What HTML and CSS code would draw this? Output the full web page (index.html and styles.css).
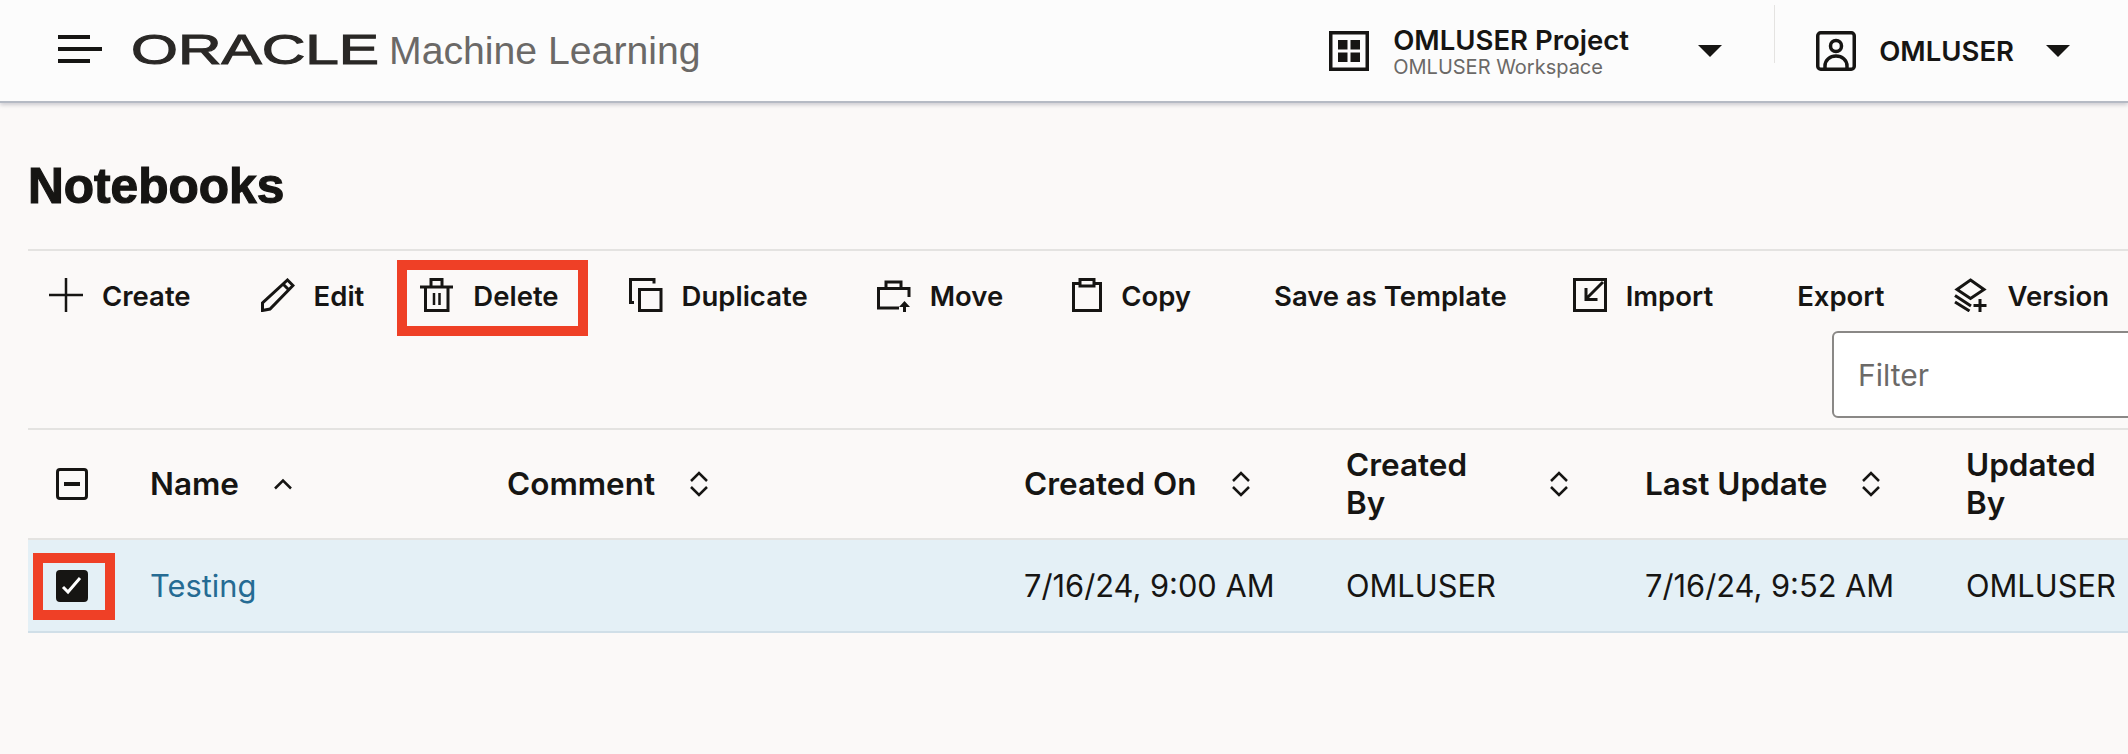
FILE: index.html
```html
<!DOCTYPE html>
<html>
<head>
    <meta charset="utf-8">
    <title>Notebooks - Oracle Machine Learning</title>
    <link rel="stylesheet" href="styles.css">
</head>
<body>

    <header class="topbar">
        <div class="brand">
            <svg class="menu-icon" width="44" height="28" viewBox="0 0 44 28"><path d="M0 0h32v4H0zM0 12h44v4H0zM0 24h32v4H0z" fill="#161513"/></svg>
            <svg class="oracle-logo" width="246" height="34" viewBox="0 0 246 34"><text x="-1" y="32" textLength="248" lengthAdjust="spacingAndGlyphs">ORACLE</text></svg>
            <span class="product">Machine Learning</span>
        </div>
        <div class="project">
            <svg width="40" height="40" viewBox="0 0 40 40"><path d="M0 0h40v40H0zM3.500 3.500v33h33v-33zM9 9h9.500v9.500H9zM21.500 9H31v9.500h-9.500zM9 21.500h9.500V31H9zM21.500 21.500H31V31h-9.500z" fill="#161513" fill-rule="evenodd"/></svg>
            <div class="project-text">
                <div class="project-name">OMLUSER Project</div>
                <div class="project-sub">OMLUSER Workspace</div>
            </div>
            <span class="caret"></span>
        </div>
        <div class="divider"></div>
        <div class="user">
            <svg width="40" height="40" viewBox="0 0 40 40" fill="none" stroke="#161513" stroke-width="3.500"><rect x="1.750" y="1.750" width="36.500" height="36.500" rx="3"/><circle cx="20" cy="15" r="5.500"/><path d="M9 38v-3c0-6 5-10 11-10s11 4 11 10v3"/></svg>
            <span class="user-name">OMLUSER</span>
            <span class="caret"></span>
        </div>
    </header>

    <main class="content">
        <h1 class="page-title">Notebooks</h1>

        <div class="toolbar">
            <div class="tool tool-create">
                <svg width="34" height="34" viewBox="0 0 34 34"><path d="M15.750 0h2.500v15.750H34v2.500H18.250V34h-2.500V18.250H0v-2.500h15.750z" fill="#161513"/></svg>
                <span>Create</span>
            </div>
            <div class="tool tool-edit">
                <svg width="34" height="34" viewBox="0 0 34 34" fill="none" stroke="#161513" stroke-width="3"><path d="M26.500 2L32 7.500 9 31l-7.500 1.500V25zM22.500 6.500l5.500 5.500"/></svg>
                <span>Edit</span>
            </div>
            <div class="tool tool-delete marked">
                <svg width="34" height="34" viewBox="0 0 34 34" fill="none" stroke="#161513" stroke-width="3"><path d="M0 9h33M11 8V1.500h11V8M5.500 10v22.500H28V10"/><path d="M14 15v12M19.500 15v12" stroke-width="2.500"/></svg>
                <span>Delete</span>
            </div>
            <div class="tool tool-duplicate">
                <svg width="34" height="34" viewBox="0 0 34 34" fill="none" stroke="#161513" stroke-width="3"><path d="M25 5.500V1.500H1.500v23H5M10.500 11.500h21.500v21H10.500z"/></svg>
                <span>Duplicate</span>
            </div>
            <div class="tool tool-move">
                <svg width="34" height="34" viewBox="0 0 34 34"><path d="M9 9V4h15v5M22 30H1.500V10.500H32V19" fill="none" stroke="#161513" stroke-width="3"/><path d="M27.500 23l5.500 6h-4v5h-3v-5h-4z" fill="#161513"/></svg>
                <span>Move</span>
            </div>
            <div class="tool tool-copy">
                <svg width="30" height="34" viewBox="0 0 30 34" fill="none" stroke="#161513" stroke-width="3"><path d="M7 5.500H1.500v27h27v-27H23M8 1.500h14v6.500H8z"/></svg>
                <span>Copy</span>
            </div>
            <div class="tool tool-template"><span>Save as Template</span></div>
            <div class="tool tool-import">
                <svg width="34" height="34" viewBox="0 0 34 34" fill="none" stroke="#161513" stroke-width="3"><rect x="1.500" y="1.500" width="31" height="31"/><path d="M30 4L13 21M13 10v11.500h11.500"/></svg>
                <span>Import</span>
            </div>
            <div class="tool tool-export"><span>Export</span></div>
            <div class="tool tool-version">
                <svg width="34" height="34" viewBox="0 0 34 34" fill="none" stroke="#161513" stroke-width="3"><path d="M16.500 2L30 11.500 16.500 20.500 3 11.500zM1 17.500l16 10.500M1 24l14.500 9M26 21v13M19.500 27.500h13"/></svg>
                <span>Version</span>
            </div>
        </div>

        <div class="filter-row">
            <div class="filter">Filter</div>
        </div>

        <table class="grid">
            <thead>
                <tr>
                    <th class="col-check"><span class="check"><i></i></span></th>
                    <th class="col-name"><span class="head">Name<svg class="sort" width="20" height="12" viewBox="0 0 20 12"><path d="M2 10.500l8-8 8 8" fill="none" stroke="#161513" stroke-width="2.500"/></svg></span></th>
                    <th class="col-comment"><span class="head">Comment<svg class="sort" width="20" height="26" viewBox="0 0 20 26"><path d="M2 10l8-8 8 8M2 16l8 8 8-8" fill="none" stroke="#161513" stroke-width="2.500"/></svg></span></th>
                    <th class="col-created"><span class="head">Created On<svg class="sort" width="20" height="26" viewBox="0 0 20 26"><path d="M2 10l8-8 8 8M2 16l8 8 8-8" fill="none" stroke="#161513" stroke-width="2.500"/></svg></span></th>
                    <th class="col-by"><span class="head"><span>Created<br>By</span><svg class="sort sort-wide" width="20" height="26" viewBox="0 0 20 26"><path d="M2 10l8-8 8 8M2 16l8 8 8-8" fill="none" stroke="#161513" stroke-width="2.500"/></svg></span></th>
                    <th class="col-update"><span class="head">Last Update<svg class="sort" width="20" height="26" viewBox="0 0 20 26"><path d="M2 10l8-8 8 8M2 16l8 8 8-8" fill="none" stroke="#161513" stroke-width="2.500"/></svg></span></th>
                    <th class="col-updated"><span class="head"><span>Updated<br>By</span></span></th>
                </tr>
            </thead>
            <tbody>
                <tr class="selected">
                    <td class="col-check"><span class="check checked marked"><svg width="24" height="24" viewBox="0 0 24 24"><path d="M3 13l5 5L20 4" fill="none" stroke="#fff" stroke-width="3"/></svg></span></td>
                    <td class="col-name"><a class="link">Testing</a></td>
                    <td></td>
                    <td>7/16/24, 9:00 AM</td>
                    <td>OMLUSER</td>
                    <td>7/16/24, 9:52 AM</td>
                    <td>OMLUSER</td>
                </tr>
            </tbody>
        </table>
    </main>

</body>
</html>
```

FILE: styles.css
```css
html, body
{
    margin: 0;
    height: 754px;
    overflow: hidden;
}

body
{
    background: #fbf9f8;
    color: #161513;
    font-family: Inter, "Liberation Sans", sans-serif;
}

/* top bar */
.topbar
{
    display: flex;
    align-items: center;
    height: 103px;
    padding: 0 58px 3px 0;
    background: #fcfcfc;
    border-bottom: 2px solid #b5bac4;
    box-shadow: 0 2px 4px rgba(100, 100, 120, 0.3);
    box-sizing: border-box;
}

.brand
{
    display: flex;
    align-items: center;
    margin-left: 58px;
    flex: 1;
}

.oracle-logo
{
    margin-left: 30px;
    overflow: visible;
}

.oracle-logo text
{
    font-family: "Liberation Sans", sans-serif;
    font-size: 43px;
    fill: #2a2826;
    stroke: #2a2826;
    stroke-width: 1.1px;
}

.product
{
    margin: 3px 0 0 11px;
    font-family: "Liberation Sans", sans-serif;
    font-size: 39.2px;
    color: #6b6967;
}

.project
{
    display: flex;
    align-items: center;
    margin-top: 3px;
}

.project-text
{
    width: 305px;
    margin-left: 24px;
    padding-top: 2px;
}

.project-name
{
    font-size: 27.5px;
    font-weight: 600;
    line-height: 30px;
}

.project-sub
{
    font-size: 20px;
    color: #6b6967;
    line-height: 24px;
}

.caret
{
    width: 0;
    height: 0;
    border-left: 12px solid transparent;
    border-right: 12px solid transparent;
    border-top: 12px solid #161513;
}

.divider
{
    align-self: flex-start;
    width: 1px;
    height: 58px;
    margin: 5px 41px 0 52px;
    background: #e4e3e1;
}

.user
{
    display: flex;
    align-items: center;
    margin-top: 3px;
}

.user-name
{
    font-size: 27.5px;
    font-weight: 600;
    margin: 0 32px 0 23px;
}

/* page */
.content
{
    padding-left: 28px;
}

.page-title
{
    margin: 0;
    padding-top: 53px;
    height: 93px;
    font-family: "Liberation Sans", sans-serif;
    font-size: 49.6px;
    font-weight: 700;
    line-height: 60px;
    -webkit-text-stroke: 1.2px #161513;
}

.toolbar
{
    display: flex;
    align-items: center;
    padding: 27px 0 19px;
    border-top: 2px solid #e4e3e1;
}

.tool
{
    display: flex;
    align-items: center;
    gap: 19px;
    height: 34px;
    font-size: 27.5px;
    font-weight: 600;
    white-space: nowrap;
    flex: none;
}

.tool span
{
    padding-top: 2px;
}

.tool-create { margin-left: 21px; }
.tool-edit { margin-left: 70px; }
.tool-delete { margin-left: 56px; }
.tool-duplicate { margin-left: 70px; }
.tool-move { margin-left: 69px; }
.tool-copy { margin-left: 69px; }
.tool-template { margin-left: 83px; }
.tool-import { margin-left: 66px; }
.tool-export { margin-left: 84px; }
.tool-version { margin-left: 70px; }

/* red annotation boxes drawn over the page */
.marked
{
    position: relative;
}

.marked::after
{
    content: "";
    position: absolute;
    border: 10px solid #ef4026;
}

.tool-delete::after
{
    left: -23px;
    right: -29px;
    top: -18px;
    bottom: -24px;
}

.checked::after
{
    left: -26px;
    right: -30px;
    top: -20px;
    bottom: -21px;
}

.filter-row
{
    height: 97px;
    padding-left: 1804px;
    box-sizing: border-box;
}

.filter
{
    width: 400px;
    height: 87px;
    border: 2px solid #8a8886;
    border-radius: 6px;
    background: #fff;
    color: #6b6967;
    font-size: 30px;
    line-height: 85px;
    padding-left: 24px;
    box-sizing: border-box;
}

/* table */
.grid
{
    border-collapse: collapse;
    table-layout: fixed;
    width: 2100px;
    border-top: 2px solid #e4e3e1;
    font-size: 30.8px;
}

.grid th
{
    height: 108px;
    padding: 0;
    text-align: left;
    font-size: 31.5px;
    font-weight: 600;
    line-height: 38px;
    border-bottom: 2px solid #e4e3e1;
}

.grid td
{
    height: 91px;
    padding: 0;
    white-space: nowrap;
}

.head
{
    display: flex;
    align-items: center;
}

.sort
{
    margin-left: 34px;
}

.sort-wide
{
    margin-left: 82px;
}

.col-check { width: 122px; }
.col-name { width: 357px; }
.col-comment { width: 517px; }
.col-created { width: 322px; }
.col-by { width: 299px; }
.col-update { width: 321px; }

.col-check .check
{
    margin-left: 28px;
}

.check
{
    display: block;
    width: 32px;
    height: 32px;
    border: 3px solid #161513;
    border-radius: 4px;
    box-sizing: border-box;
}

.check i
{
    display: block;
    width: 16px;
    height: 4px;
    margin: 11px auto 0;
    background: #161513;
}

.checked
{
    background: #161513;
    display: flex;
    align-items: center;
    justify-content: center;
}

.selected
{
    background: #e4f0f6;
    border-bottom: 2px solid #d0dfe8;
}

.link
{
    color: #256b93;
}
```
